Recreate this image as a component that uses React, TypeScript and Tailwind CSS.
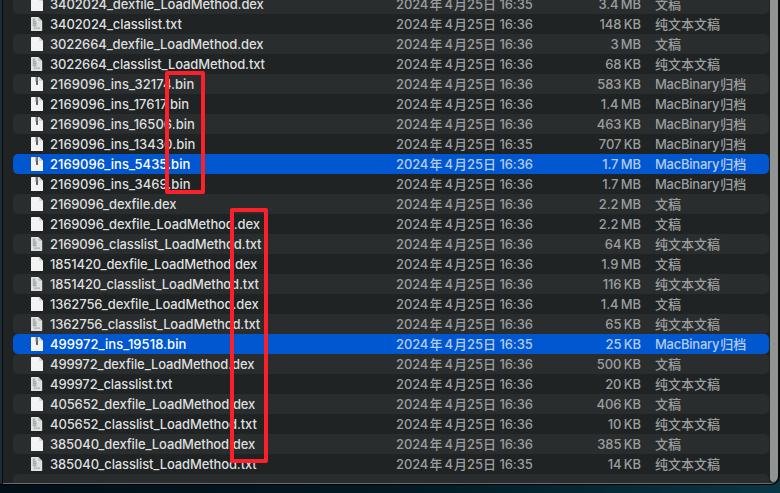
type Kind = 'dex' | 'txt' | 'bin';
type Entry = { name: string; kind: Kind; size: string; time: string; selected?: boolean };

const entries: Entry[] = [
  { name: '3402024_dexfile_LoadMethod.dex', kind: 'dex', size: '3.4 MB', time: '16:35' },
  { name: '3402024_classlist.txt', kind: 'txt', size: '148 KB', time: '16:36' },
  { name: '3022664_dexfile_LoadMethod.dex', kind: 'dex', size: '3 MB', time: '16:36' },
  { name: '3022664_classlist_LoadMethod.txt', kind: 'txt', size: '68 KB', time: '16:36' },
  { name: '2169096_ins_32174.bin', kind: 'bin', size: '583 KB', time: '16:36' },
  { name: '2169096_ins_17617.bin', kind: 'bin', size: '1.4 MB', time: '16:36' },
  { name: '2169096_ins_16506.bin', kind: 'bin', size: '463 KB', time: '16:36' },
  { name: '2169096_ins_13430.bin', kind: 'bin', size: '707 KB', time: '16:35' },
  { name: '2169096_ins_5435.bin', kind: 'bin', size: '1.7 MB', time: '16:36', selected: true },
  { name: '2169096_ins_3469.bin', kind: 'bin', size: '1.7 MB', time: '16:36' },
  { name: '2169096_dexfile.dex', kind: 'dex', size: '2.2 MB', time: '16:36' },
  { name: '2169096_dexfile_LoadMethod.dex', kind: 'dex', size: '2.2 MB', time: '16:36' },
  { name: '2169096_classlist_LoadMethod.txt', kind: 'txt', size: '64 KB', time: '16:36' },
  { name: '1851420_dexfile_LoadMethod.dex', kind: 'dex', size: '1.9 MB', time: '16:36' },
  { name: '1851420_classlist_LoadMethod.txt', kind: 'txt', size: '116 KB', time: '16:36' },
  { name: '1362756_dexfile_LoadMethod.dex', kind: 'dex', size: '1.4 MB', time: '16:36' },
  { name: '1362756_classlist_LoadMethod.txt', kind: 'txt', size: '65 KB', time: '16:36' },
  { name: '499972_ins_19518.bin', kind: 'bin', size: '25 KB', time: '16:35', selected: true },
  { name: '499972_dexfile_LoadMethod.dex', kind: 'dex', size: '500 KB', time: '16:36' },
  { name: '499972_classlist.txt', kind: 'txt', size: '20 KB', time: '16:36' },
  { name: '405652_dexfile_LoadMethod.dex', kind: 'dex', size: '406 KB', time: '16:36' },
  { name: '405652_classlist_LoadMethod.txt', kind: 'txt', size: '10 KB', time: '16:36' },
  { name: '385040_dexfile_LoadMethod.dex', kind: 'dex', size: '385 KB', time: '16:36' },
  { name: '385040_classlist_LoadMethod.txt', kind: 'txt', size: '14 KB', time: '16:35' },
];

function FileIcon({ kind }: { kind: Kind }) {
  return (
    <svg viewBox="0 0 12 14" className="h-[14px] w-[12px] shrink-0">
      {kind === 'txt' ? (
        <>
          <path d="M0.6 0H7.4L11.2 3.8V13.4Q11.2 14 10.6 14H0.6Q0 14 0 13.4V0.6Q0 0 0.6 0Z" fill="#dfe0e0" />
          <path d="M1.8 1.5H4.4V4.5H5.4V9.5H1.8Z" fill="#b7b9b9" />
          <path d="M2 2.5H4M2 4.5H5M2 6.5H5.6M2 8.5H5.4" stroke="#9ea0a0" strokeWidth="0.6" />
          <path d="M3 11.2H9" stroke="#9fa1a1" strokeWidth="1.3" strokeDasharray="1.6 0.5" />
          <path d="M7.4 0L11.2 3.8H7.4Z" fill="#b9bbbb" />
        </>
      ) : (
        <>
          <path d="M0.6 0H8.2L12 3.8V13.4Q12 14 11.4 14H0.6Q0 14 0 13.4V0.6Q0 0 0.6 0Z" fill="#f3f3f3" />
          <path d="M8.2 0L12 3.8H8.8Q8.2 3.8 8.2 3.2Z" fill="#cfd0d0" />
          {kind === 'bin' && (
            <>
              <path d="M4.6 0H7.1V4.5H4.6Z" fill="#747878" />
              <path d="M5 4H7V7.6Q7 8 6.6 8H5.4Q5 8 5 7.6Z" fill="#5c6060" />
            </>
          )}
        </>
      )}
    </svg>
  );
}

const kindLabel = { dex: '文稿', txt: '纯文本文稿' };

function Row({ entry, striped }: { entry: Entry; striped: boolean }) {
  const bg = entry.selected ? 'bg-[#0057d0]' : striped ? 'bg-[#2a2d2e]' : '';
  const meta = entry.selected ? 'text-[#b3cbee]' : 'text-[#9c9e9e]';
  const nameColor = entry.selected ? 'text-white' : 'text-[#dedfdf]';
  const tracking = entry.kind === 'bin' ? 'tracking-[0.05px]' : 'tracking-[-0.12px]';
  return (
    <div className={`flex h-5 shrink-0 items-center rounded-[5px] pl-[18px] ${bg}`}>
      <FileIcon kind={entry.kind} />
      <span className={`ml-[7px] w-[346px] whitespace-nowrap ${nameColor} ${tracking}`}>{entry.name}</span>
      <div className={`flex w-[138px] items-center tracking-[-0.12px] whitespace-nowrap ${meta}`}>
        <span className="w-[33.5px]">2024</span>
        <span className="w-[15px]">年</span>
        <span className="w-[9.5px]">4</span>
        <span className="w-[13px]">月</span>
        <span className="w-[16px]">25</span>
        <span className="w-[16.5px]">日</span>
        <span>{entry.time}</span>
      </div>
      <span className={`w-[107px] text-right tracking-[-0.1px] whitespace-nowrap [word-spacing:-1px] ${meta}`}>
        {entry.size}
      </span>
      <span className={`ml-[14px] whitespace-nowrap ${meta}`}>
        {entry.kind === 'bin' ? (
          <>
            <span className="tracking-[-0.25px]">MacBinary</span>
            <span className="ml-px">归档</span>
          </>
        ) : (
          kindLabel[entry.kind]
        )}
      </span>
    </div>
  );
}

export default function App() {
  return (
    <div className="relative h-[493px] w-[780px] overflow-hidden bg-linear-to-r from-[#021017] via-[#021a24] to-[#0b3644] font-['Inter','Noto_Sans_CJK_SC',sans-serif] text-[13px] leading-5 font-medium">
      <div className="flex h-[485px] overflow-hidden rounded-br-[9px] border-b border-black bg-[#0a0b0b]">
        <div className="h-[485px] w-0.5 shrink-0 bg-[#1c2b34]" />
        <div className="ml-px flex h-[484px] w-[775px] shrink-0 overflow-hidden rounded-br-[8px] border-b border-[#6a6d6d] bg-[#1f2324]">
          <div className="-mt-1.5 flex h-[489px] w-[767px] shrink-0 flex-col overflow-hidden pr-[1px] pl-[10px]">
            {entries.map((entry, i) => (
              <Row key={entry.name} entry={entry} striped={i % 2 === 0} />
            ))}
            <div className="h-5 shrink-0 rounded-[5px] bg-[#2a2d2e]" />
          </div>
          <div className="h-[482px] w-2 shrink-0 rounded-b-[5px] bg-[#929494]" />
        </div>
      </div>
      <div className="absolute top-[71px] left-[165px] h-[123px] w-10 rounded-[2px] border-4 border-[#fb2029]" />
      <div className="absolute top-[208px] left-[230px] h-[255px] w-[38px] rounded-[2px] border-4 border-[#fb2029]" />
    </div>
  );
}
